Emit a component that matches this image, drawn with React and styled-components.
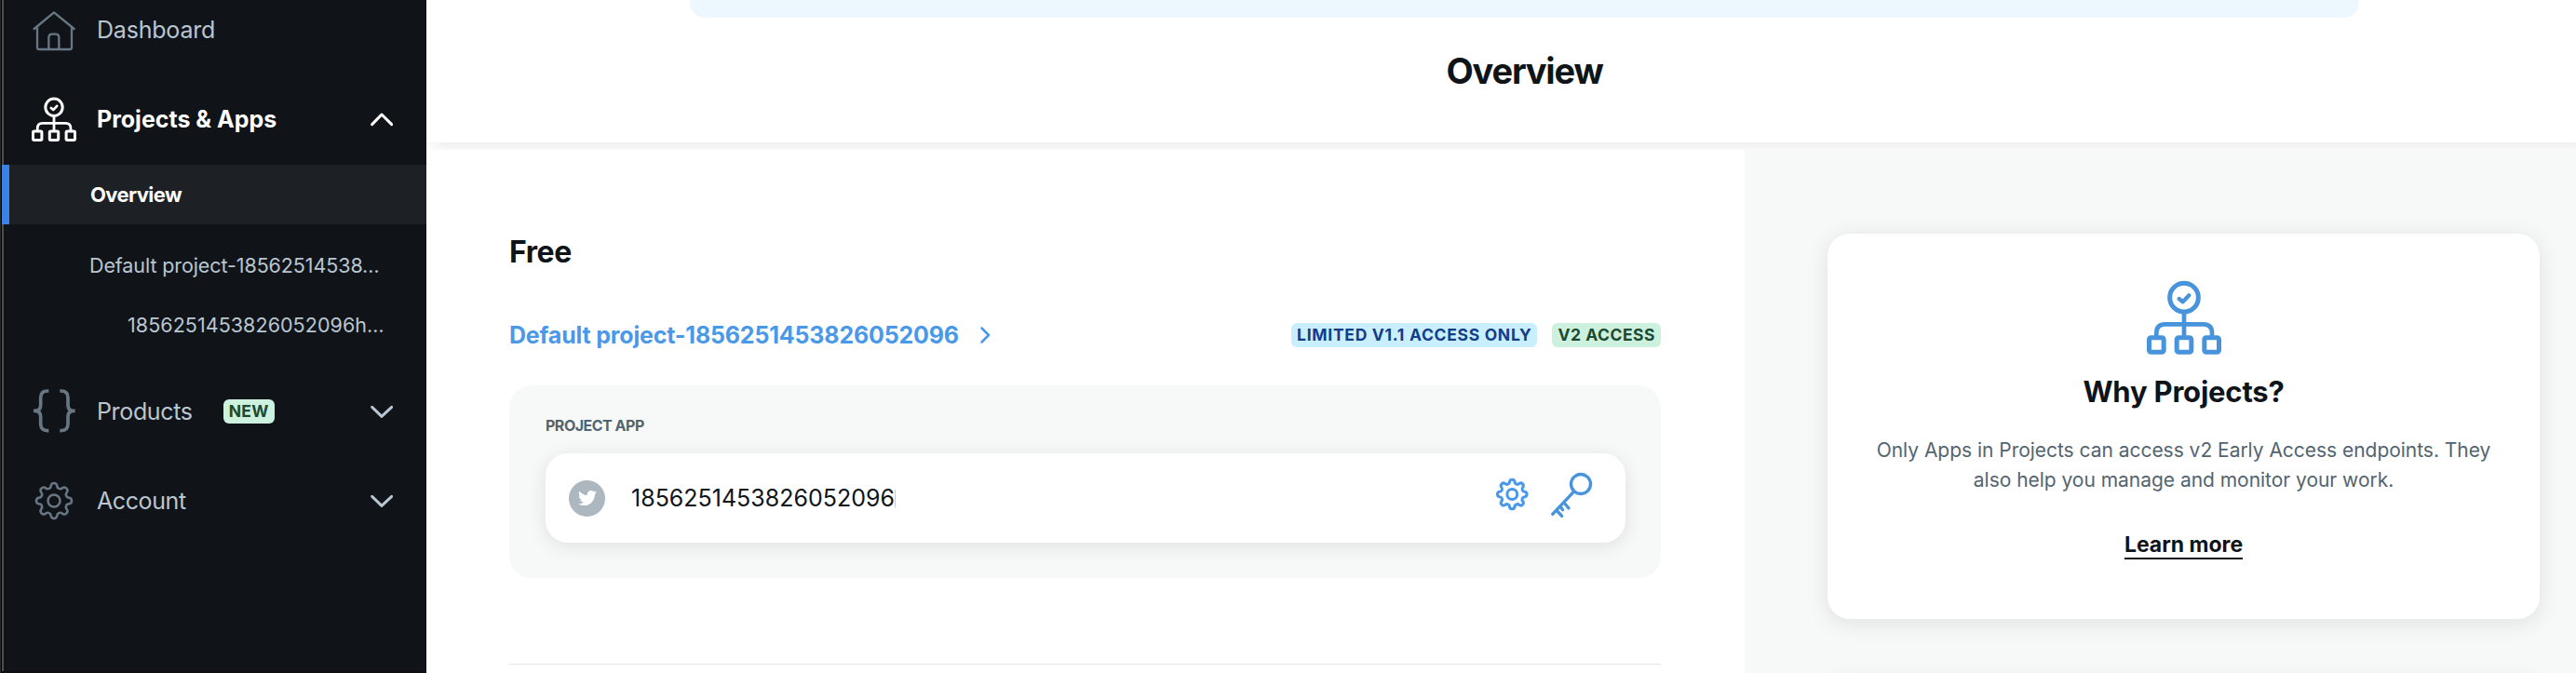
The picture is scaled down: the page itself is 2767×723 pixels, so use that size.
import React from 'react';
import styled, { createGlobalStyle } from 'styled-components';
import { FaTwitter } from 'react-icons/fa';

const GlobalStyle = createGlobalStyle`
	* {
		box-sizing: border-box;
	}
	body {
		margin: 0;
		font-family: Inter, 'Liberation Sans', sans-serif;
		color: #0f1419;
		background-color: #ffffff;
	}
	a {
		color: inherit;
		text-decoration: none;
	}
	h1, h2, h3, p {
		margin: 0;
	}
`;

const Page = styled.div`
	display: flex;
	height: 723px;
	overflow: hidden;
`;
const WindowEdge = styled.div`
	flex: none;
	width: 2px;
	background: linear-gradient(to right, #262a1f 50%, #000000 50%);
`;

const Sidebar = styled.nav`
	flex: none;
	width: 456px;
	background-color: #101418;
	box-shadow: inset 2px 0 #4c4e52;
	border-bottom: 2px solid #130b13;
	color: #b9c6d1;
`;
const MenuItem = styled.a`
	display: flex;
	align-items: center;
	height: 96px;
	margin-top: ${(props) => props.$offset || 0}px;
	padding: 0 36px 0 32px;
	color: ${(props) => (props.$active ? '#ffffff' : '#b9c6d1')};
	font-weight: ${(props) => (props.$active ? 700 : 400)};
`;
const MenuIcon = styled.svg`
	flex: none;
	width: 48px;
	height: 48px;
	color: ${(props) => props.$color || '#687684'};
`;
const MenuLabel = styled.span`
	margin-left: 22px;
	font-size: 25px;
	letter-spacing: ${(props) => props.$spacing}px;
	white-space: nowrap;
`;
const MenuArrow = styled.svg`
	width: 24px;
	height: 24px;
	margin-left: auto;
`;
const SubMenu = styled.div`
	display: flex;
	flex-direction: column;
	margin: 1px 0 13px;
`;
const ActiveSubItem = styled.a`
	height: 64px;
	margin-bottom: 12px;
	padding-left: 87px;
	border-left: 8px solid #3b82e8;
	background-color: #1d2025;
	color: #ffffff;
	font-size: 22px;
	font-weight: 700;
	letter-spacing: -0.6px;
	line-height: 64px;
`;
const SubItem = styled.a`
	height: 64px;
	padding-left: ${(props) => (props.$nested ? 135 : 94)}px;
	font-size: 21.5px;
	letter-spacing: ${(props) => (props.$nested ? 0.05 : -0.1)}px;
	line-height: 64px;
	white-space: nowrap;
`;

const badgeColors = {
	green: ['#ccf1de', '#1b4a30'],
	blue: ['#c9effe', '#133d88'],
};
const Badge = styled.span`
	height: 26px;
	margin-left: ${(props) => props.$gap || 0}px;
	padding: 0 6px;
	border-radius: 6px;
	background-color: ${(props) => badgeColors[props.$tone][0]};
	color: ${(props) => badgeColors[props.$tone][1]};
	font-size: 17.5px;
	font-weight: 700;
	letter-spacing: ${(props) => props.$spacing}px;
	line-height: 26px;
	white-space: nowrap;
`;

const Content = styled.div`
	flex: 1;
	display: flex;
	flex-direction: column;
`;
const Header = styled.header`
	flex: none;
	display: flex;
	flex-direction: column;
	align-items: center;
	height: 153px;
	padding-left: 50px;
`;
const Banner = styled.div`
	flex: none;
	width: 1793px;
	height: 19px;
	border-radius: 0 0 16px 16px;
	background-color: #edf8fe;
`;
const PageTitle = styled.h1`
	margin-top: 33px;
	font-size: 38px;
	font-weight: 700;
	letter-spacing: -1.2px;
	line-height: 48px;
`;
const HeaderShadow = styled.div`
	flex: none;
	height: 8px;
	background: linear-gradient(to right, rgba(255, 255, 255, 0.8), rgba(255, 255, 255, 0) 20px), linear-gradient(#f0f0f0, #f8f8f8);
`;
const Columns = styled.div`
	flex: 1;
	display: grid;
	grid-template-columns: 1416px 1fr;
`;

const Main = styled.main`
	padding: 90px 90px 0 89px;
`;
const PlanTitle = styled.h2`
	font-size: 32px;
	font-weight: 700;
	letter-spacing: -0.4px;
	line-height: 40px;
`;
const ProjectRow = styled.div`
	display: flex;
	align-items: center;
	height: 26px;
	margin-top: 56px;
`;
const ProjectLink = styled.a`
	display: flex;
	align-items: center;
	margin-right: auto;
	color: #4a99e9;
	font-size: 25px;
	font-weight: 700;
	letter-spacing: -0.18px;
	line-height: 26px;

	svg {
		width: 12px;
		height: 20px;
		margin-left: 22px;
	}
`;
const ProjectCard = styled.section`
	height: 207px;
	margin-top: 41px;
	padding: 33px 38px 0 39px;
	border-radius: 24px;
	background-color: #f7f9f8;
`;
const CardLabel = styled.h3`
	color: #536471;
	font-size: 16px;
	font-weight: 700;
	letter-spacing: -0.5px;
	line-height: 20px;
`;
const AppRow = styled.div`
	display: flex;
	align-items: center;
	height: 96px;
	margin-top: 20px;
	padding: 0 34px 0 25px;
	border-radius: 24px;
	background-color: #ffffff;
	box-shadow: 0 4px 20px rgba(15, 20, 25, 0.1);
`;
const Avatar = styled.div`
	display: flex;
	align-items: center;
	justify-content: center;
	width: 39px;
	height: 39px;
	border-radius: 50%;
	background-color: #acb7c0;
	color: #ffffff;
	font-size: 20px;
`;
const AppName = styled.span`
	margin-left: 28px;
	border-right: 1px solid #c4c8cb;
	font-size: 25px;
	line-height: 19px;
`;
const AppActions = styled.div`
	display: flex;
	align-items: center;
	gap: 20px;
	margin: 0 0 6px auto;
	color: #4a99e9;
`;
const GearButton = styled.svg`
	width: 40px;
	height: 40px;
	margin-bottom: 2px;
`;
const KeyButton = styled.svg`
	width: 48px;
	height: 52px;
	color: #4793dc;
`;
const Divider = styled.div`
	height: 1px;
	margin-top: 92px;
	background-color: #e6e8e8;
`;

const Aside = styled.aside`
	display: flex;
	flex-direction: column;
	gap: 64px;
	padding: 90px 39px 0 89px;
	background-color: #f7f9f8;
`;
const InfoCard = styled.section`
	flex: none;
	display: flex;
	flex-direction: column;
	align-items: center;
	height: 414px;
	padding-top: 50px;
	border-radius: 24px;
	background-color: #ffffff;
	box-shadow: 0 4px 24px rgba(15, 20, 25, 0.1);
`;
const InfoIcon = styled.svg`
	width: 80px;
	height: 80px;
	color: #4793dc;
`;
const InfoTitle = styled.h2`
	margin-top: 20px;
	font-size: 31px;
	font-weight: 700;
	letter-spacing: -0.2px;
	line-height: 40px;
`;
const InfoText = styled.p`
	width: 670px;
	margin-top: 27px;
	color: #536471;
	font-size: 21px;
	letter-spacing: -0.03px;
	line-height: 32px;
	text-align: center;
`;
const InfoLink = styled.a`
	margin-top: 39px;
	border-bottom: 2px solid #0f1419;
	font-size: 23px;
	font-weight: 700;
	letter-spacing: 0;
	line-height: 28px;
`;

// eight rounded teeth, centred on 0,0
const gearPath = () => {
	const point = (deg) => {
		const rad = (deg * Math.PI) / 180;
		return `${(50 * Math.cos(rad)).toFixed(2)} ${(50 * Math.sin(rad)).toFixed(2)}`;
	};
	let d = `M${point(-11.5)}`;
	for (let a = 0; a < 360; a += 45) {
		d += `A10.2 10.2 0 0 1 ${point(a + 11.5)}A10.2 10.2 0 0 0 ${point(a + 33.5)}`;
	}
	return d + 'Z';
};

const Gear = ({ weight }) => (
	<g fill="none" stroke="currentColor" strokeWidth={weight} strokeLinejoin="round">
		<path d={gearPath()} />
		<circle r="19.5" />
	</g>
);

const ProjectTree = () => (
	<g fill="none" stroke="currentColor" strokeWidth="15" strokeLinecap="butt" strokeLinejoin="round">
		<circle cx="348" cy="118" r="46" />
		<path d="M332 122l12 10 20-21" strokeWidth="13" strokeLinecap="round" />
		<path d="M348 166v76M259 242v-10q0-28 28-28h123q28 0 28 28v10" strokeWidth="14" />
		<rect x="235.5" y="247" width="47" height="47" rx="6" />
		<rect x="324.5" y="247" width="47" height="47" rx="6" />
		<rect x="413.5" y="247" width="47" height="47" rx="6" />
	</g>
);

const Arrow = ({ up }) => (
	<MenuArrow viewBox="0 0 72 72" fill="none" stroke="currentColor" strokeWidth="9" strokeLinecap="round" strokeLinejoin="round">
		<path d={up ? 'M5 53L36 21L68 53' : 'M5 22L36 52L68 22'} />
	</MenuArrow>
);

const Navigation = () => (
	<Sidebar>
		<MenuItem $offset={-16}>
			<MenuIcon viewBox="102 24 144 144" fill="none" stroke="currentColor" strokeWidth="7" strokeLinecap="round" strokeLinejoin="round">
				<path d="M110 93L174 40L239 93M120 86v66q0 7 7 7h97q7 0 7-7V86" />
				<path d="M157 159v-38q0-11 11-11h11q11 0 11 11v38" />
			</MenuIcon>
			<MenuLabel $spacing={-0.2}>Dashboard</MenuLabel>
		</MenuItem>
		<MenuItem $active>
			<MenuIcon $color="#ffffff" viewBox="228 62 240 240"><ProjectTree /></MenuIcon>
			<MenuLabel $spacing={0}>Projects &amp; Apps</MenuLabel>
			<Arrow up />
		</MenuItem>
		<SubMenu>
			<ActiveSubItem>Overview</ActiveSubItem>
			<SubItem>Default project-18562514538…</SubItem>
			<SubItem $nested>1856251453826052096h…</SubItem>
		</SubMenu>
		<MenuItem>
			<MenuIcon viewBox="102 534 144 144" fill="none" stroke="currentColor" strokeWidth="11">
				<path d="M157 540h-4q-22 0-22 22v23q0 19-19 19h-4M108 604h4q19 0 19 19v23q0 22 22 22h4" />
				<path d="M193 540h4q22 0 22 22v23q0 19 19 19h4M242 604h-4q-19 0-19 19v23q0 22-22 22h-4" />
			</MenuIcon>
			<MenuLabel $spacing={-0.35}>Products</MenuLabel>
			<Badge $tone="green" $gap={33} $spacing={0.3}>NEW</Badge>
			<Arrow />
		</MenuItem>
		<MenuItem>
			<MenuIcon viewBox="-72 -72 144 144"><Gear weight={7.5} /></MenuIcon>
			<MenuLabel $spacing={-0.4}>Account</MenuLabel>
			<Arrow />
		</MenuItem>
	</Sidebar>
);

const App = () => {
	return (
		<>
			<GlobalStyle />
			<Page>
				<WindowEdge />
				<Navigation />

				<Content>
					<Header>
						<Banner />
						<PageTitle>Overview</PageTitle>
					</Header>
					<HeaderShadow />

					<Columns>
						<Main>
							<PlanTitle>Free</PlanTitle>
							<ProjectRow>
								<ProjectLink>
									Default project-1856251453826052096
									<svg viewBox="0 0 12 20" fill="none" stroke="currentColor" strokeWidth="2.5" strokeLinecap="round" strokeLinejoin="round">
										<path d="M2.5 2.5L10 10L2.5 17.5" />
									</svg>
								</ProjectLink>
								<Badge $tone="blue" $spacing={0.7}>LIMITED V1.1 ACCESS ONLY</Badge>
								<Badge $tone="green" $gap={16} $spacing={0.5}>V2 ACCESS</Badge>
							</ProjectRow>

							<ProjectCard>
								<CardLabel>PROJECT APP</CardLabel>
								<AppRow>
									<Avatar><FaTwitter /></Avatar>
									<AppName>1856251453826052096</AppName>
									<AppActions>
										<GearButton viewBox="-73 -72 144 144"><Gear weight={11} /></GearButton>
										<KeyButton viewBox="252 78 144 156" fill="none" stroke="currentColor" strokeWidth="10" strokeLinecap="round">
											<circle cx="354" cy="120" r="31.5" />
											<path d="M331 145L263 217M300 180L315 198M288 193L296 203M278 207L293 223" />
										</KeyButton>
									</AppActions>
								</AppRow>
							</ProjectCard>
							<Divider />
						</Main>

						<Aside>
							<InfoCard>
								<InfoIcon viewBox="228 62 240 240"><ProjectTree /></InfoIcon>
								<InfoTitle>Why Projects?</InfoTitle>
								<InfoText>
									Only Apps in Projects can access v2 Early Access endpoints. They also help you manage and monitor your work.
								</InfoText>
								<InfoLink>Learn more</InfoLink>
							</InfoCard>
							<InfoCard />
						</Aside>
					</Columns>
				</Content>
			</Page>
		</>
	);
};

export default App;
